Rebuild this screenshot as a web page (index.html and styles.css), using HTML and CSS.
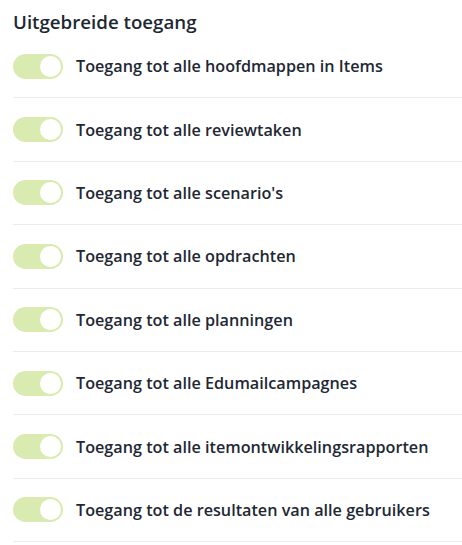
FILE: index.html
```html
<!DOCTYPE html>
<html>
<head>
<meta charset="utf-8">
<link rel="stylesheet" href="styles.css">
</head>
<body>
<div class="panel">
  <h2 class="title">Uitgebreide toegang</h2>
  <ul class="list">
    <li class="row"><span class="toggle"><span class="knob"></span></span><span class="label">Toegang tot alle hoofdmappen in Items</span></li>
    <li class="row"><span class="toggle"><span class="knob"></span></span><span class="label">Toegang tot alle reviewtaken</span></li>
    <li class="row"><span class="toggle"><span class="knob"></span></span><span class="label">Toegang tot alle scenario's</span></li>
    <li class="row"><span class="toggle"><span class="knob"></span></span><span class="label">Toegang tot alle opdrachten</span></li>
    <li class="row"><span class="toggle"><span class="knob"></span></span><span class="label">Toegang tot alle planningen</span></li>
    <li class="row"><span class="toggle"><span class="knob"></span></span><span class="label">Toegang tot alle Edumailcampagnes</span></li>
    <li class="row"><span class="toggle"><span class="knob"></span></span><span class="label">Toegang tot alle itemontwikkelingsrapporten</span></li>
    <li class="row"><span class="toggle"><span class="knob"></span></span><span class="label">Toegang tot de resultaten van alle gebruikers</span></li>
  </ul>
</div>
</body>
</html>
```
FILE: styles.css
```css
html, body {
  margin: 0;
  padding: 0;
  background: #ffffff;
}
body {
  font-family: "Open Sans", "Liberation Sans", sans-serif;
  color: #1e2833;
}
.panel {
  padding: 0 0 0 13px;
}
.title {
  margin: 0;
  padding-top: 10px;
  font-size: 18.7px;
  line-height: 24px;
  font-weight: 600;
}
.list {
  list-style: none;
  margin: 0;
  padding: 0;
  margin-top: 20px;
}
.row {
  display: flex;
  align-items: center;
  gap: 13px;
  padding: 19px 0 19px 0;
  border-bottom: 1px solid #ececec;
  box-sizing: border-box;
  height: 63.4px;
}
.row:first-child {
  padding-top: 0;
  height: 44.4px;
}
.toggle {
  flex: none;
  width: 50px;
  height: 25px;
  border-radius: 13px;
  background: #d9ebb0;
  position: relative;
}
.knob {
  position: absolute;
  right: 2px;
  top: 2px;
  width: 21px;
  height: 21px;
  border-radius: 50%;
  background: #ffffff;
}
.label {
  font-size: 16.2px;
  font-weight: 600;
  line-height: 22px;
}
```
